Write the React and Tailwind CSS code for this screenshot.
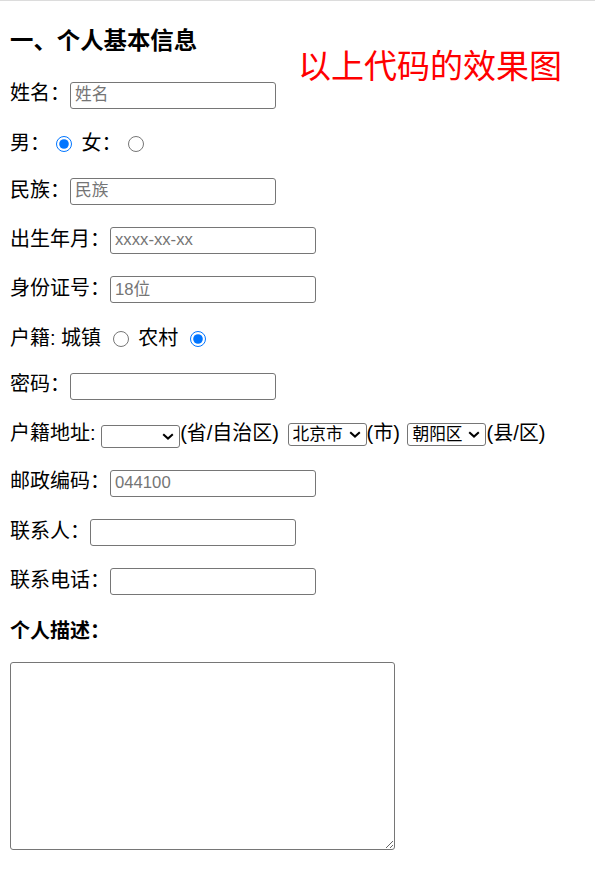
import React from 'react';

const FONT = "font-['Liberation_Sans','Noto_Sans_CJK_SC',sans-serif]";

const Row = ({ h, children, inner = '' }) => (
    <div className={`${h} flex items-center`}>
        <div className={`leading-[24px] whitespace-nowrap ${inner}`}>{children}</div>
    </div>
);

const Field = ({ placeholder, type = 'text' }) => (
    <input type={type} placeholder={placeholder}
        className="w-[206px] h-[27px] border border-[#767676] rounded-[3px] px-[4px] text-[16.7px] align-middle outline-none placeholder:text-[#757575]" />
);

const Radio = ({ name, checked }) => (
    <input type="radio" name={name} defaultChecked={checked}
        className="w-[16px] h-[16px] m-0 ml-[6px] mr-[4px] align-[-2px] accent-[#0075ff]" />
);

const Chevron = () => (
    <svg width="12" height="7" viewBox="0 0 12 7" className="shrink-0 mr-[5px]">
        <path d="M1.2 1.2 L6 5.6 L10.8 1.2" fill="none" stroke="#000" strokeWidth="2" />
    </svg>
);

const Select = ({ options, cls }) => (
    <span className={`inline-flex items-center w-[79px] h-[23px] border border-[#767676] rounded-[3px] ${cls}`}>
        <select defaultValue={options[0]} className="appearance-none flex-1 min-w-0 h-full bg-transparent pl-[4px] text-[16.7px] leading-[21px] outline-none">
            {options.map(o => <option key={o} value={o}>{o}</option>)}
        </select>
        <Chevron />
    </span>
);

const App = () => {
    return (
        <div className={`${FONT} relative min-h-[891px] bg-white text-black text-[20px]`}>
            <div className="h-px bg-[#dcdcdc]"></div>
            <div className="px-[10px]">
                <div className="h-[69px] pt-[10px] flex items-center">
                    <h3 className="text-[23.4px] font-bold leading-[28px]">一、个人基本信息</h3>
                </div>

                <Row h="h-[48px]" inner="pt-[2px]">姓名：<Field placeholder="姓名" /></Row>
                <Row h="h-[48px]" inner="pt-[1px]">男：<Radio name="sex" checked />{' '}女：<Radio name="sex" /></Row>
                <Row h="h-[48.5px]" inner="pt-[2px]">民族：<Field placeholder="民族" /></Row>
                <Row h="h-[49.5px]" inner="pt-[2px]">出生年月：<Field placeholder="xxxx-xx-xx" /></Row>
                <Row h="h-[49px]" inner="pt-[2px]">身份证号：<Field placeholder="18位" /></Row>
                <Row h="h-[48px]" inner="pt-[1px]">户籍: 城镇{' '}<Radio name="hj" />{' '}农村{' '}<Radio name="hj" checked /></Row>
                <Row h="h-[48px]" inner="pt-[2px]">密码：<Field type="password" /></Row>
                <Row h="h-[48.5px]" inner="pt-[3px]">
                    户籍地址:{' '}<Select options={['']} cls="align-[-2px]" />(省/自治区){' '}
                    <Select options={['北京市']} cls="align-[0px] ml-[3px]" />(市){' '}
                    <Select options={['朝阳区']} cls="align-[0px] ml-[2px]" />(县/区)
                </Row>
                <Row h="h-[49px]" inner="pt-[2px]">邮政编码：<Field placeholder="044100" /></Row>
                <Row h="h-[49.5px]" inner="pt-[2px]">联系人：<Field /></Row>
                <Row h="h-[49.5px]" inner="pt-[2px]">联系电话：<Field /></Row>
                <Row h="h-[49.5px]" inner="pt-[1px]"><span className="font-bold">个人描述：</span></Row>

                <textarea className="block mt-[7px] w-[385px] h-[188px] border border-[#767676] rounded-[3px] outline-none"></textarea>
            </div>

            <div className="absolute left-[298px] top-[47px] text-[33px] leading-[40px] text-[#ff0000]">以上代码的效果图</div>
        </div>
    );
};

export default App;
